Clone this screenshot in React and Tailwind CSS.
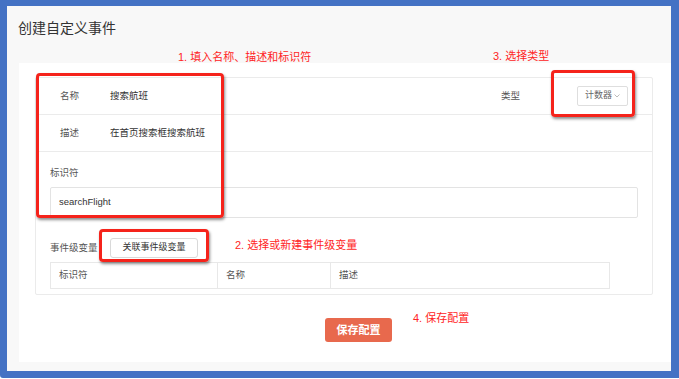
const font = { fontFamily: '"Liberation Sans", "Noto Sans CJK SC", sans-serif' };

const Note = ({ className, children }) => (
  <div className={`absolute whitespace-nowrap text-[11px] leading-none text-[#ff2424] ${className}`}>{children}</div>
);

const RedBox = ({ className }) => (
  <div className={`absolute rounded-[4px] border-[3px] border-[#f5231b] shadow-[1px_2px_3px_rgba(0,0,0,0.45)] ${className}`} />
);

export default function App() {
  return (
    <div className="relative h-[379px] w-[679px] overflow-hidden bg-white" style={font}>
      <div className="flex h-[378px] w-[679px] flex-col rounded-bl-[3px] border-b-[7px] border-l-[7px] border-r-[8px] border-t-[6px] border-[#4472c4] bg-[#f8f8f8]">
        {/* header */}
        <div className="flex h-[57px] shrink-0 items-start pl-[11px] pt-[14px]">
          <h1 className="text-[14px] leading-[16px] text-[#333]">创建自定义事件</h1>
        </div>

        {/* white panel */}
        <div className="ml-[12px] flex h-[299px] flex-col bg-white pl-[16px] pr-[18px] pt-[14px]">
          <div className="flex h-[218px] flex-col rounded-[2px] border border-[#ebebeb]">
            <div className="flex h-[37px] shrink-0 items-center border-b border-[#ebebeb] pl-[24px] pr-[24px] text-[9.5px]">
              <span className="w-[50px] text-[#555]">名称</span>
              <span className="text-[#333]">搜索航班</span>
              <span className="ml-auto text-[#555]">类型</span>
              <div className="ml-[57px] flex h-[20px] w-[51px] items-center justify-center gap-[2px] rounded-[2px] border border-[#dedede] text-[9px] text-[#666]">
                计数器
                <svg width="6" height="4" viewBox="0 0 6 4" fill="none" stroke="#aaa" strokeWidth="0.8">
                  <path d="M0.5 0.5 L3 3 L5.5 0.5" />
                </svg>
              </div>
            </div>
            <div className="flex h-[37px] shrink-0 items-center border-b border-[#ebebeb] pl-[24px] text-[9.5px]">
              <span className="w-[50px] text-[#555]">描述</span>
              <span className="text-[#333]">在首页搜索框搜索航班</span>
            </div>
            <div className="flex flex-col px-[14px] pt-[14px]">
              <span className="text-[9.5px] leading-[14px] text-[#555]">标识符</span>
              <div className="mt-[7px] flex h-[31px] items-center rounded-[2px] border border-[#e3e3e3] pl-[8px] text-[9.5px] text-[#333]">
                searchFlight
              </div>
              <div className="mt-[20px] flex items-center">
                <span className="w-[60px] text-[9.5px] text-[#555]">事件级变量</span>
                <button className="flex h-[20px] w-[88px] items-center justify-center rounded-[3px] border border-[#d9d9d9] bg-white text-[9px] text-[#333]">
                  关联事件级变量
                </button>
              </div>
              <div className="mt-[4px] flex h-[27px] w-[560px] border border-[#e8e8e8] text-[9.5px] text-[#555]">
                <div className="flex w-[167px] items-center border-r border-[#e8e8e8] pl-[8px]">标识符</div>
                <div className="flex w-[113px] items-center border-r border-[#e8e8e8] pl-[8px]">名称</div>
                <div className="flex flex-1 items-center pl-[8px]">描述</div>
              </div>
            </div>
          </div>
          <div className="ml-[290px] mt-[23px]">
            <button className="flex h-[24px] w-[67px] items-center justify-center rounded-[3px] bg-[#e8694d] text-[11px] font-bold text-white">
              保存配置
            </button>
          </div>
        </div>
      </div>

      {/* annotations */}
      <Note className="left-[178px] top-[52px]">1. 填入名称、描述和标识符</Note>
      <Note className="left-[493px] top-[51px]">3. 选择类型</Note>
      <Note className="left-[235px] top-[240px]">2. 选择或新建事件级变量</Note>
      <Note className="left-[413px] top-[313px]">4. 保存配置</Note>
      <RedBox className="left-[36px] top-[73px] h-[145px] w-[188px]" />
      <RedBox className="left-[551px] top-[70px] h-[47px] w-[84px]" />
      <RedBox className="left-[99px] top-[229px] h-[33px] w-[110px]" />
    </div>
  );
}
